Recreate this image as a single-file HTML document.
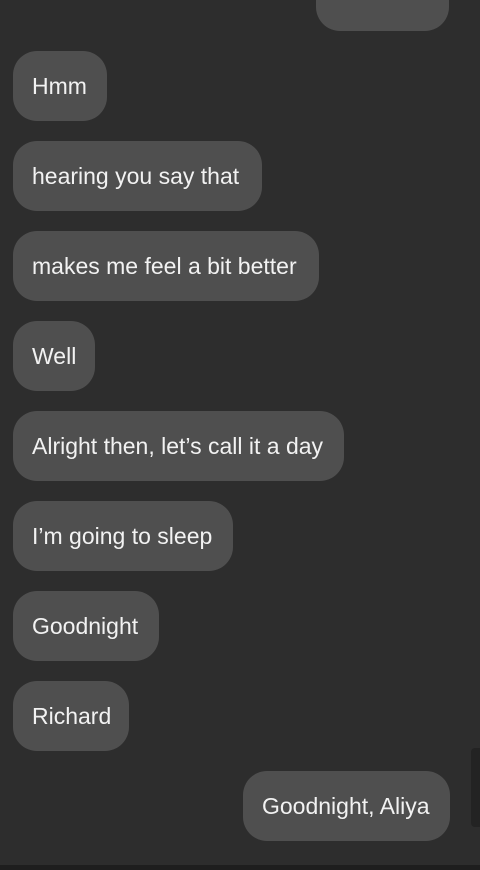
<!DOCTYPE html>
<html><head><meta charset="utf-8"><style>
body{margin:0;width:480px;height:870px;background:#2d2d2d;position:relative;overflow:hidden;font-family:"Liberation Sans",sans-serif}
.b{position:absolute;height:70px;border-radius:24px;background:#4f4f4f;color:#f2f2f2;font-size:23px;line-height:71px;padding-left:19px;box-sizing:border-box;white-space:nowrap}
</style></head><body>
<div class="b" style="left:316px;top:-39px;width:133px"></div>
<div class="b" style="left:13px;top:51px;width:94px">Hmm</div>
<div class="b" style="left:13px;top:141px;width:249px">hearing you say that</div>
<div class="b" style="left:13px;top:231px;width:306px">makes me feel a bit better</div>
<div class="b" style="left:13px;top:321px;width:82px">Well</div>
<div class="b" style="left:13px;top:411px;width:331px">Alright then, let’s call it a day</div>
<div class="b" style="left:13px;top:501px;width:220px">I’m going to sleep</div>
<div class="b" style="left:13px;top:591px;width:146px">Goodnight</div>
<div class="b" style="left:13px;top:681px;width:116px">Richard</div>
<div class="b" style="left:243px;top:771px;width:207px">Goodnight, Aliya</div>
<div style="position:absolute;left:471px;top:748px;width:20px;height:79px;border-radius:4px;background:#232323"></div>
<div style="position:absolute;left:0;top:865px;width:480px;height:5px;background:#1e1e1e"></div>
</body></html>
